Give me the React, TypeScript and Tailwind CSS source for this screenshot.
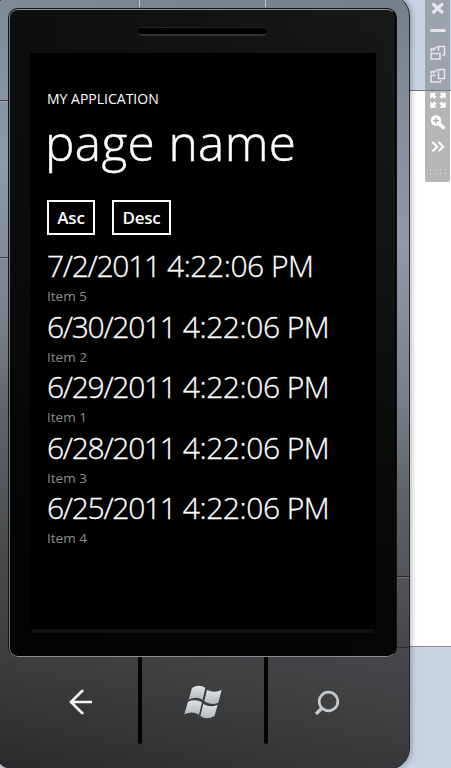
const items = [
  { date: "7/2/2011", time: "4:22:06", name: "Item 5" },
  { date: "6/30/2011", time: "4:22:06", name: "Item 2" },
  { date: "6/29/2011", time: "4:22:06", name: "Item 1" },
  { date: "6/28/2011", time: "4:22:06", name: "Item 3" },
  { date: "6/25/2011", time: "4:22:06", name: "Item 4" },
];

function Toolbar() {
  return (
    <div className="absolute left-[425px] top-0 z-10 h-[182px] w-[25px] rounded-b-[2px] bg-[#787b7c]/55">
      <svg width="25" height="182" viewBox="0 0 25 182" fill="none" stroke="#fff">
        <g opacity="0.72">
          <path d="M7.500 3.500l10.500 9.500M18 3.500L7.500 13" strokeWidth="3.400" />
          <path d="M5.500 30.500h15" strokeWidth="3" />
          <path d="M6 53.500h9v5.500h-9zM13.500 51v-4.500h6v8.500h-2.500M6.300 52v-3.500h2.500M12 46.500l-4 4" strokeWidth="1.600" />
          <path d="M13.500 69.500h6v9h-6zM11 75.500h-5v6.500h9.500v-2M6.300 74v-2.500h2.500M12 69.500l-4 4" strokeWidth="1.600" />
        </g>
        <path d="M5.500 93h5.500l-1.700 1.700 2 2-2 2-2-2-1.800 1.800zM20.500 93v5.500l-1.800-1.800-2 2-2-2 2-2L15 93zM5.500 107.500V102l1.800 1.800 2-2 2 2-2 2 1.700 1.700zM20.500 107.500H15l1.700-1.700-2-2 2-2 2 2 1.800-1.800z" fill="#fff" stroke="#fff" strokeWidth="0.500" />
        <circle cx="11" cy="120.500" r="5.200" fill="#fff" stroke="none" />
        <path d="M14 123.500l5.300 5" strokeWidth="3.600" />
        <path d="M8 120.500h6M11 117.500v6" stroke="#a2a4a5" strokeWidth="1.300" />
        <path d="M7.500 142l4.700 4.700-4.700 4.700M13.500 142l4.700 4.700-4.700 4.700" strokeWidth="2" />
        <path d="M5 169.500h16M5 173.500h16" strokeDasharray="1 4" strokeWidth="1" opacity="0.6" />
      </svg>
    </div>
  );
}

function HardwareKeys() {
  return (
    <div className="flex h-[87px]">
      <div className="flex w-[130px] justify-center pl-[14px] pt-[32px]">
        <svg width="25" height="26" viewBox="0 0 25 26" fill="none" stroke="#f4f4f5" strokeWidth="2.700">
          <path d="M24 13H3M15.500 2h-1.500L3 13l11 11h1.500" />
        </svg>
      </div>
      <div className="h-full w-1 rounded-b-sm bg-[#030303]" />
      <div className="flex w-[122px] justify-center pt-[28px]">
        <svg width="38.300" height="35" viewBox="40 45 115 105" fill="url(#metal)">
          <defs>
            <linearGradient id="metal" x1="0" y1="0" x2="0" y2="1">
              <stop offset="0" stopColor="#e2e4e6" />
              <stop offset="1" stopColor="#b3b8bc" />
            </linearGradient>
          </defs>
          <path d="M64 54Q84 41 104 53L96 89Q76 77 54 89Z" />
          <path d="M109 60Q130 70 153 60L143 98Q122 107 101 94Z" />
          <path d="M52 95Q74 86 94 97L85 134Q65 121 41 133Z" />
          <path d="M98 102Q120 114 141 104L132 137Q110 152 89 138Z" />
        </svg>
      </div>
      <div className="h-full w-1 rounded-b-sm bg-[#030303]" />
      <div className="flex w-[117px] justify-center pt-[33px]">
        <svg width="26" height="27" viewBox="0 0 26 27" fill="none" stroke="#c6c9cb">
          <circle cx="14.500" cy="11.500" r="9.300" strokeWidth="2.700" />
          <path d="M8 18l-6 6" strokeWidth="3.200" />
        </svg>
      </div>
    </div>
  );
}

function Seams() {
  return (
    <>
      <i className="absolute left-0 top-[100px] h-[2px] w-2 border-b border-[#a5adb8] bg-[#3c424a]" />
      <i className="absolute left-0 top-[257px] h-[2px] w-2 border-b border-[#8d949e] bg-[#3c424a]" />
      <i className="absolute left-[139px] top-0 h-[7px] w-px bg-[#c3c7cd]" />
      <i className="absolute left-[265px] top-0 h-[7px] w-px bg-[#c3c7cd]" />
      <i className="absolute left-[397px] top-[576px] h-[2px] w-[12px] border-b border-[#6f7276] bg-[#1d1f21]" />
      <i className="absolute left-[397px] top-[647px] h-px w-[13px] bg-[#2a2c2e]" />
    </>
  );
}

export default function App() {
  return (
    <div className="relative h-[768px] w-[451px] overflow-hidden bg-[linear-gradient(#c9d3e4_0_90px,#717b86_90px_91px,#fff_91px_646px,#858b91_646px_647px,#c9d3e4_647px)] font-['Open_Sans','Noto_Sans',sans-serif] text-white">
      <div className="-ml-[7px] -mt-[6px] h-[776px] w-[417px] overflow-hidden rounded-[22px] border border-[#20242a] bg-[linear-gradient(191deg,#757d89_0px,#828b98_100px,#8f99a8_245px,#7a818c_392px,#5f6369_490px,#54575b_559px,#47494c_627px,#404143_700px,#353638_770px,#29292b_841px)] pl-[14px] pt-[13px] shadow-[1px_0_6px_#0005]">
        <div className="h-[649px] w-[389px] rounded-[10px] border border-b-0 border-[#121314] bg-[linear-gradient(100deg,#0c0e0e,#1b1d1d)]">
          <div className="h-full rounded-[9px] border border-b-[#8a8c8e] border-l-[#777a7d] border-r-black border-t-[#8d9299] bg-[linear-gradient(#0000_0,#0003_200px,#0009_420px,#000c_600px)] px-[20px]">
            <div className="mx-auto mt-[17px] h-[9px] w-[129px] rounded-[4px] border-b-2 border-t border-b-[#2f3032] border-t-[#242626] bg-black" />
            <main className="mt-[17px] flex h-[576px] w-[346px] flex-col bg-black pl-[17px]">
              <p className="mt-[36px] h-5 whitespace-nowrap text-[14px] leading-5">MY APPLICATION</p>
              <h1 className="-ml-[2px] h-[64px] whitespace-nowrap pt-px text-[49.500px] font-light leading-[64px] tracking-[0.4px] [-webkit-text-stroke:0.5px_white]">page name</h1>
              <div className="mt-[27px] flex gap-[17px]">
                <button className="h-[35px] w-[48px] border-2 border-white text-[17px] font-semibold leading-[31px] tracking-[-0.2px]">Asc</button>
                <button className="h-[35px] w-[59px] border-2 border-white text-[17px] font-semibold leading-[31px] tracking-[-0.2px]">Desc</button>
              </div>
              <ul className="mt-[11px]">
                {items.map((i) => (
                  <li key={i.name} className="h-[60.500px]">
                    <div className="h-[39px] whitespace-nowrap text-[30px] font-light leading-[39px] tracking-[-0.6px] [-webkit-text-stroke:0.3px_white]">
                      <span className="tracking-[-1.3px]">{i.date}</span> <span className="tracking-[-0.45px]">{i.time}</span> PM
                    </div>
                    <div className="h-5 pt-px text-[13.500px] leading-5 text-[#8c8c8c]">{i.name}</div>
                  </li>
                ))}
              </ul>
            </main>
            <div className="mx-[2px] h-1 w-[342px] bg-[#101010]" />
          </div>
        </div>
        <HardwareKeys />
      </div>
      <Seams />
      <Toolbar />
    </div>
  );
}
